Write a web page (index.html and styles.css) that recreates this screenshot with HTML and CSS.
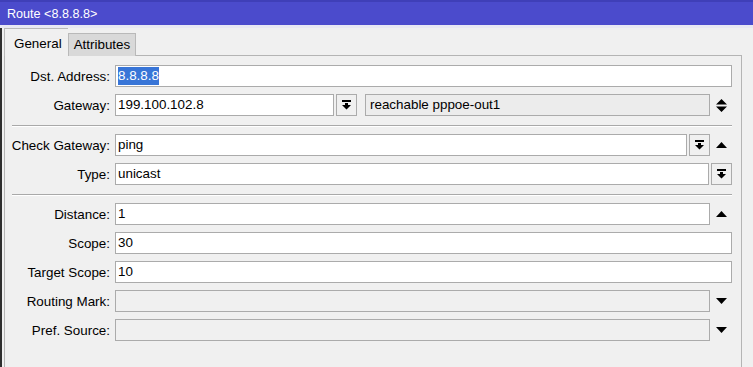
FILE: index.html
```html
<!DOCTYPE html>
<html lang="en">
  <head>
    <meta charset="UTF-8" />
    <title>Route &lt;8.8.8.8&gt;</title>
    <link rel="stylesheet" href="styles.css">
  </head>
  <body>
    <div class="window">
      <div class="titlebar">Route &lt;8.8.8.8&gt;</div>
      <div class="content">
        <div class="tabs">
          <span class="tab active">General</span>
          <span class="tab">Attributes</span>
        </div>
        <div class="panel">
          <div class="row">
            <label>Dst. Address:</label>
            <div class="field"><span class="sel">8.8.8.8</span></div>
          </div>
          <div class="row">
            <label>Gateway:</label>
            <div class="field gw">199.100.102.8</div>
            <span class="btn">
              <svg width="9" height="10" viewBox="0 0 9 10"><path fill="#000" d="M0 0h9v2H0zM3 3h3v2h3L4.5 9.5 0 5h3z" /></svg>
            </span>
            <div class="field ro">reachable pppoe-out1</div>
            <span class="slot">
              <svg width="11" height="13" viewBox="0 0 11 13"><path fill="#000" d="M5.5 0L11 5.5H0zM0 7.5h11L5.5 13z" /></svg>
            </span>
          </div>
          <hr class="sep">
          <div class="row">
            <label>Check Gateway:</label>
            <div class="field">ping</div>
            <span class="btn">
              <svg width="9" height="10" viewBox="0 0 9 10"><path fill="#000" d="M0 0h9v2H0zM3 3h3v2h3L4.5 9.5 0 5h3z" /></svg>
            </span>
            <span class="slot">
              <svg width="11" height="6" viewBox="0 0 11 6"><path fill="#000" d="M5.5 0L11 6H0z" /></svg>
            </span>
          </div>
          <div class="row">
            <label>Type:</label>
            <div class="field">unicast</div>
            <span class="btn">
              <svg width="9" height="10" viewBox="0 0 9 10"><path fill="#000" d="M0 0h9v2H0zM3 3h3v2h3L4.5 9.5 0 5h3z" /></svg>
            </span>
          </div>
          <hr class="sep">
          <div class="row">
            <label>Distance:</label>
            <div class="field">1</div>
            <span class="slot">
              <svg width="11" height="6" viewBox="0 0 11 6"><path fill="#000" d="M5.5 0L11 6H0z" /></svg>
            </span>
          </div>
          <div class="row">
            <label>Scope:</label>
            <div class="field">30</div>
          </div>
          <div class="row">
            <label>Target Scope:</label>
            <div class="field">10</div>
          </div>
          <div class="row">
            <label>Routing Mark:</label>
            <div class="field off"></div>
            <span class="slot">
              <svg width="11" height="6" viewBox="0 0 11 6"><path fill="#000" d="M0 0h11L5.5 6z" /></svg>
            </span>
          </div>
          <div class="row">
            <label>Pref. Source:</label>
            <div class="field off"></div>
            <span class="slot">
              <svg width="11" height="6" viewBox="0 0 11 6"><path fill="#000" d="M0 0h11L5.5 6z" /></svg>
            </span>
          </div>
        </div>
      </div>
    </div>
  </body>
</html>
```

FILE: styles.css
```css
* {
  box-sizing: border-box;
}

html,
body {
  margin: 0;
  height: 100%;
}

body {
  background: #f0f0f0;
  font-family: "Liberation Sans", Arial, sans-serif;
  font-size: 13.4px;
  color: #000;
  overflow: hidden;
}

.window {
  height: 100%;
  display: flex;
  flex-direction: column;
}

.titlebar {
  height: 28px;
  padding: 2px 0 0 7px;
  font-size: 12.6px;
  line-height: 21px;
  background: #4b4bcc;
  border-top: 2px solid #3f3fb8;
  border-bottom: 3px solid #e8e8f3;
  color: #fff;
}

.content {
  flex: 1;
  display: flex;
  flex-direction: column;
  border-left: 2px solid #2e2e2e;
  padding-left: 2px;
  padding-right: 11px;
}

.tabs {
  display: flex;
  align-items: flex-end;
  height: 28px;
  margin-bottom: -1px;
  position: relative;
  z-index: 1;
}

.tab {
  height: 23px;
  padding: 0 5px;
  line-height: 22px;
  border: 1px solid #b9b9b9;
  border-bottom: none;
  background: #d9d9d9;
}

.tab.active {
  height: 28px;
  padding: 0 6px 0 9px;
  line-height: 29px;
  background: #f0f0f0;
  border-right: none;
}

.panel {
  flex: 1;
  display: flex;
  flex-direction: column;
  gap: 7px;
  padding: 9px 9px 0 0;
  border: 1px solid #b4b4b4;
  border-bottom: none;
}

.row {
  display: flex;
  height: 22px;
  align-items: center;
}

label {
  width: 110px;
  padding-right: 5px;
  text-align: right;
  white-space: nowrap;
}

.field {
  flex: 1;
  height: 22px;
  padding-left: 2px;
  line-height: 20px;
  border: 1px solid #ababab;
  background: #fff;
  white-space: nowrap;
}

.field.gw {
  flex: 0 0 219px;
}

.field.ro {
  margin-left: 8px;
  padding-left: 4px;
  background: #ececec;
}

.field.off {
  background: #f0f0f0;
}

.sel {
  display: inline-block;
  line-height: 18px;
  background: #3875d7;
  color: #fff;
}

.btn {
  flex: 0 0 21px;
  height: 22px;
  margin-left: 2px;
  display: flex;
  align-items: center;
  justify-content: center;
  border: 1px solid #ababab;
  background: #f0f0f0;
}

.slot {
  flex: 0 0 22px;
  display: flex;
  justify-content: center;
  padding-left: 1px;
}

.sep {
  margin: 2px 0 0 7px;
  height: 2px;
  border: none;
  border-top: 1px solid #a9a9a9;
  border-bottom: 1px solid #fff;
}
```
